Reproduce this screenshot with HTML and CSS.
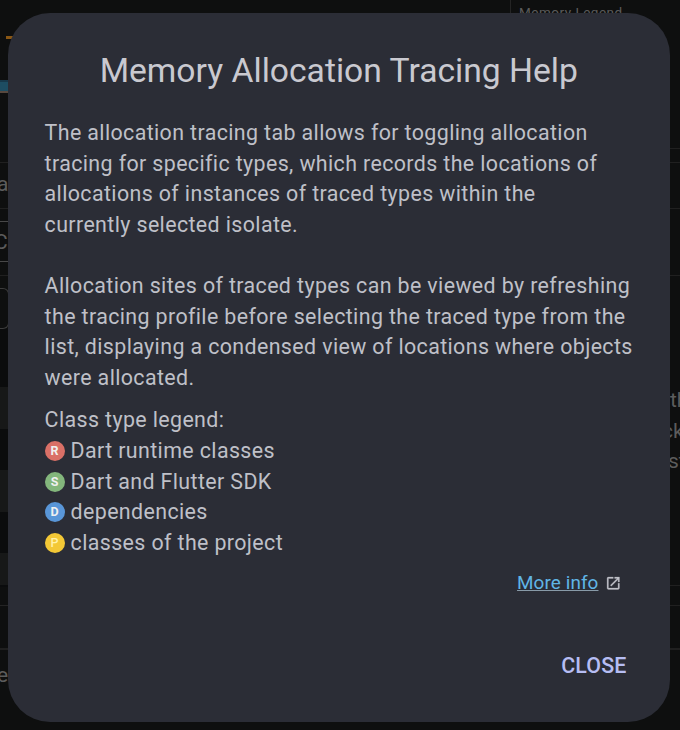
FILE: index.html
```html
<!DOCTYPE html>
<html lang="en">
<head>
<meta charset="utf-8">
<title>Memory Allocation Tracing Help</title>
<link rel="stylesheet" href="styles.css">
</head>
<body>
<div class="backdrop" aria-hidden="true">
  <div class="left-pane">
    <div class="chart"><i class="dash"></i><i class="area"></i></div>
    <div class="row tab">a</div>
    <div class="gap"></div>
    <div class="row control">C</div>
    <div class="rule"></div>
    <div class="search"></div>
    <div class="table"><i></i><i></i><i></i><i></i><i></i></div>
    <div class="status"></div>
    <div class="divider"></div>
    <div class="footer">e</div>
  </div>
  <div class="legend">Memory Legend</div>
  <div class="right-pane">
    <div class="r1"></div><div class="r2"></div><div class="r3"></div><div class="r4"></div>
    <div class="hint"><span>th</span><span>ck</span><span>st</span></div>
    <div class="r5"></div><div class="r6"></div>
  </div>
</div>
<main class="dialog" role="dialog" aria-labelledby="title">
  <h1 id="title">Memory Allocation Tracing Help</h1>
  <p>The allocation tracing tab allows for toggling allocation<br>tracing for specific types, which records the locations of<br>allocations of instances of traced types within the<br>currently selected isolate.</p>
  <p>Allocation sites of traced types can be viewed by refreshing<br>the tracing profile before selecting the traced type from the<br>list, displaying a condensed view of locations where objects<br>were allocated.</p>
  <section>
    <div>Class type legend:</div>
    <ul>
      <li><span class="badge red">R</span>Dart runtime classes</li>
      <li><span class="badge green">S</span>Dart and Flutter SDK</li>
      <li><span class="badge blue">D</span>dependencies</li>
      <li><span class="badge yellow">P</span>classes of the project</li>
    </ul>
  </section>
  <div class="more">
    <a>More info</a>
    <svg viewBox="0 0 24 24" width="16.5" height="16.5"><path fill="currentColor" stroke="currentColor" stroke-width=".4" d="M19 19H5V5h7V3H5a2 2 0 0 0-2 2v14a2 2 0 0 0 2 2h14c1.100 0 2-.9 2-2v-7h-2v7zM14 3v2h3.590l-9.830 9.830 1.410 1.410L19 6.410V10h2V3h-7z"/></svg>
  </div>
  <button class="close" type="button">CLOSE</button>
</main>
</body>
</html>
```

FILE: styles.css
```css
* { box-sizing: border-box; }
body {
  margin: 0;
  width: 680px;
  height: 730px;
  overflow: hidden;
  background: #0e0f0f;
  font-family: Roboto, "Liberation Sans", sans-serif;
  padding: 13px 10px 8px 8px;
}
.backdrop {
  position: absolute;
  inset: 0;
  display: flex;
  justify-content: space-between;
  overflow: hidden;
  color: #5c5c5c;
  font-size: 21px;
}
.left-pane { width: 12px; }
.chart {
  height: 163px;
  padding-top: 36px;
  border-bottom: 1px solid #202020;
}
.chart i { display: block; }
.dash { width: 7px; height: 3px; margin-left: 6px; background: #8a5714; }
.area {
  height: 13px;
  margin-top: 41px;
  background: #1d4d62;
  border-top: 2px solid #17384a;
  border-bottom: 2px solid #57483e;
}
.row { line-height: 43px; }
.tab { height: 46px; border-bottom: 1px solid #202020; text-indent: -3px; }
.gap { height: 13px; border-bottom: 1px solid #484848; }
.control { height: 40px; border-bottom: 1px solid #484848; line-height: 40px; text-indent: -6px; }
.rule { height: 14px; border-bottom: 1px solid #202020; }
.search {
  width: 9px;
  height: 41px;
  margin-top: 12px;
  border: solid #3c3c3c;
  border-width: 1px 1px 1px 0;
  border-radius: 0 6px 6px 0;
}
.table { padding-top: 58px; background: #0b0c0d; height: 258px; }
.table i { display: block; height: 41.500px; }
.table i:nth-child(odd) { background: #171818; }
.table i:last-child { height: 32px; }
.status { height: 19px; border-bottom: 1px solid #242424; }
.divider { height: 44px; border-bottom: 2px solid #202020; }
.footer { line-height: 50px; text-indent: -3px; }
.legend {
  width: 170px;
  height: 30px;
  margin-left: auto;
  padding-left: 8px;
  border-left: 1px solid #242424;
  font-size: 13.500px;
  line-height: 24px;
  letter-spacing: .5px;
  white-space: nowrap;
}
.right-pane { width: 12px; margin-left: -12px; }
.right-pane > div { border-bottom: 1px solid #202020; }
.r1 { height: 149px; }
.r2 { height: 14px; }
.r3 { height: 46px; }
.r4 { height: 67px; }
.r5 { height: 20px; }
.right-pane .r6 { height: 44px; border-bottom-width: 2px; }
.hint { height: 310px; padding-top: 109px; }
.hint span { display: block; line-height: 30.600px; text-indent: 2px; }
.hint span:nth-child(2) { text-indent: -6px; }
.hint span:nth-child(3) { text-indent: 0; }
.dialog {
  position: relative;
  height: 709px;
  border-radius: 42px;
  background: #2b2d36;
  color: #bfc0c8;
  padding: 36px 37px 0 36.600px;
  font-size: 21.400px;
  line-height: 30.600px;
  letter-spacing: .38px;
  display: flex;
  flex-direction: column;
  white-space: nowrap;
}
h1 {
  margin: 0 0 25px;
  font-size: 33.650px;
  line-height: 44px;
  font-weight: 400;
  letter-spacing: 0;
  text-align: center;
  color: #c9c9d0;
}
p { margin: 0 0 30.600px; }
p + p { margin-bottom: 12px; }
ul { list-style: none; margin: 0; padding: 0; }
li { display: flex; align-items: center; gap: 6px; }
.badge {
  width: 20px;
  height: 20px;
  font-size: 12.500px;
  border-radius: 50%;
  font-weight: 700;
  line-height: 20px;
  letter-spacing: 0;
  text-align: center;
  color: #f0f0f0;
}
.red { background: #da7067; }
.green { background: #83b67c; }
.blue { background: #5996d8; }
.yellow { background: #f3c836; color: #fff1a8; font-weight: 500; }
.more {
  display: flex;
  align-items: center;
  align-self: flex-end;
  gap: 6.500px;
  margin: 9.500px 11.500px 0 0;
  color: #bfc0c8;
}
.more a {
  font-size: 18.900px;
  letter-spacing: .1px;
  color: #60b5e6;
  text-decoration: underline;
  text-decoration-color: #889aa8;
  text-decoration-skip-ink: none;
  text-decoration-thickness: 1px;
  text-underline-offset: 1px;
}
.close {
  align-self: flex-end;
  margin: 52.500px 6.500px 0 0;
  padding: 0;
  border: 0;
  background: none;
  color: #b6bdf3;
  font: 500 21.400px/30.600px Roboto, sans-serif;
  letter-spacing: .15px;
}
```
